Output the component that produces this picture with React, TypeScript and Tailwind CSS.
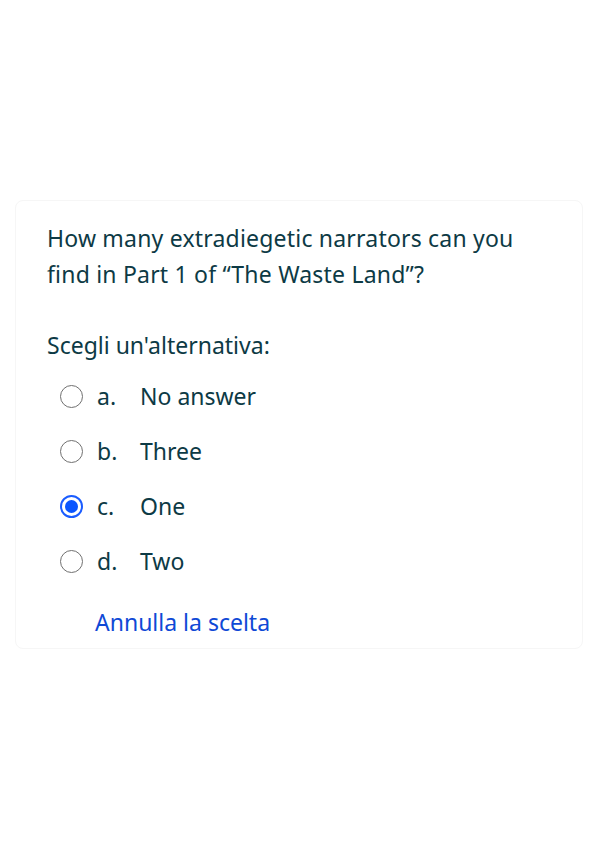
import { useState } from "react";

type Option = { letter: string; label: string };

const options: Option[] = [
  { letter: "a.", label: "No answer" },
  { letter: "b.", label: "Three" },
  { letter: "c.", label: "One" },
  { letter: "d.", label: "Two" },
];

function Radio({ checked }: { checked: boolean }) {
  if (checked) {
    return (
      <span className="flex h-[23px] w-[23px] items-center justify-center rounded-full border-2 border-[#1a5cff]">
        <span className="h-[13px] w-[13px] rounded-full bg-[#0a55ff]" />
      </span>
    );
  }
  return <span className="block h-[23px] w-[23px] rounded-full border-[1.5px] border-[#707070]" />;
}

export default function App() {
  const [selected, setSelected] = useState<string | null>("c.");

  return (
    <main className="min-h-[848px] bg-white pt-[200px] font-['Noto_Sans',sans-serif] text-[#0d3a45]">
      <div className="mx-[15px] w-[568px] rounded-lg border border-[#f6f6f6] pt-[19px] pb-[8px] pl-[31px] pr-[20px]">
        <p className="max-w-[480px] text-[23px] leading-[36px] tracking-[0.2px]">
          How many extradiegetic narrators can you find in Part 1 of “The Waste Land”?
        </p>
        <p className="mt-[35px] text-[23px] leading-[36px]">Scegli un'alternativa:</p>
        <div className="mt-[6px] flex flex-col">
          {options.map((opt) => (
            <label
              key={opt.letter}
              className="flex h-[55px] cursor-pointer items-center"
              onClick={() => setSelected(opt.letter)}
            >
              <span className="ml-[13px] w-[37px]">
                <Radio checked={selected === opt.letter} />
              </span>
              <span className="w-[43px] text-[23px]">{opt.letter}</span>
              <span className="text-[23px]">{opt.label}</span>
            </label>
          ))}
        </div>
        <button
          className="ml-[48px] mt-[15px] text-[23px] leading-[36px] text-[#0f49d6]"
          onClick={() => setSelected(null)}
        >
          Annulla la scelta
        </button>
      </div>
    </main>
  );
}
